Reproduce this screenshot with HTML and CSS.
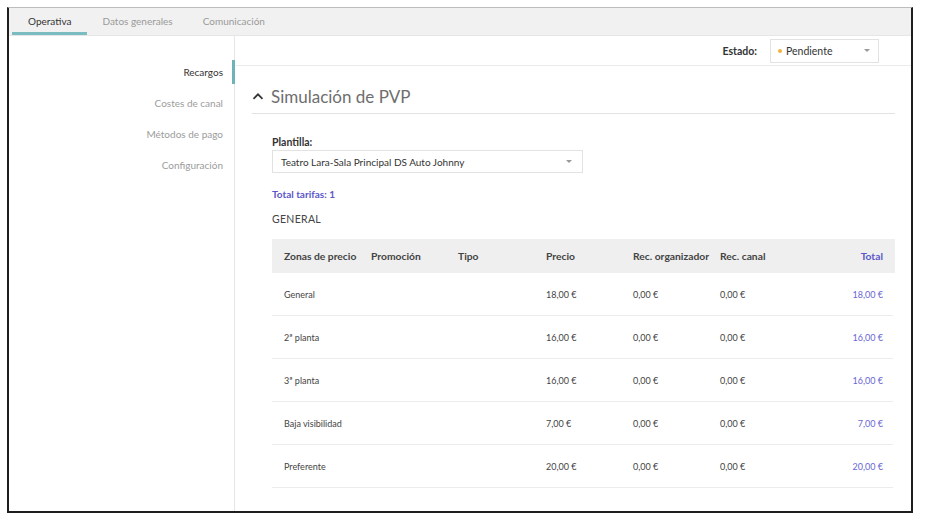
FILE: index.html
```html
<!DOCTYPE html>
<html lang="es">
<head>
<meta charset="utf-8">
<title>Simulación de PVP</title>
<link rel="stylesheet" href="styles.css">
</head>
<body>
<div class="frame">
  <nav class="tabs">
    <span class="tab active">Operativa</span>
    <span class="tab">Datos generales</span>
    <span class="tab">Comunicación</span>
  </nav>
  <div class="layout">
    <aside class="sidebar">
      <a class="side-item active">Recargos</a>
      <a class="side-item">Costes de canal</a>
      <a class="side-item">Métodos de pago</a>
      <a class="side-item">Configuración</a>
    </aside>
    <main class="main">
      <div class="topbar">
        <span class="estado-label">Estado:</span>
        <div class="select estado">
          <span class="dot"></span>
          <span class="select-text">Pendiente</span>
          <span class="caret"></span>
        </div>
      </div>
      <section class="section">
        <h2 class="section-title">
          <svg class="chev" width="12" height="8" viewBox="0 0 12 8"><path d="M1.5 6.8 L6 2.3 L10.5 6.8" fill="none" stroke="#333" stroke-width="1.7"/></svg>
          <span>Simulación de PVP</span>
        </h2>
        <div class="body">
          <label class="field-label">Plantilla:</label>
          <div class="select plantilla">
            <span class="select-text">Teatro Lara-Sala Principal DS Auto Johnny</span>
            <span class="caret"></span>
          </div>
          <div class="total-tarifas">Total tarifas: 1</div>
          <div class="group-name">GENERAL</div>
          <div class="table">
            <div class="row head">
              <span>Zonas de precio</span><span>Promoción</span><span>Tipo</span><span>Precio</span><span>Rec. organizador</span><span>Rec. canal</span><span class="total">Total</span>
            </div>
            <div class="row">
              <span>General</span><span></span><span></span><span>18,00 €</span><span>0,00 €</span><span>0,00 €</span><span class="total">18,00 €</span>
            </div>
            <div class="row">
              <span>2ª planta</span><span></span><span></span><span>16,00 €</span><span>0,00 €</span><span>0,00 €</span><span class="total">16,00 €</span>
            </div>
            <div class="row">
              <span>3ª planta</span><span></span><span></span><span>16,00 €</span><span>0,00 €</span><span>0,00 €</span><span class="total">16,00 €</span>
            </div>
            <div class="row">
              <span>Baja visibilidad</span><span></span><span></span><span>7,00 €</span><span>0,00 €</span><span>0,00 €</span><span class="total">7,00 €</span>
            </div>
            <div class="row">
              <span>Preferente</span><span></span><span></span><span>20,00 €</span><span>0,00 €</span><span>0,00 €</span><span class="total">20,00 €</span>
            </div>
          </div>
        </div>
      </section>
    </main>
  </div>
</div>
</body>
</html>
```
FILE: styles.css
```css
* { box-sizing: border-box; }
html, body { margin: 0; padding: 0; background: #fff; }
body {
  font-family: Lato, "Noto Sans", "Liberation Sans", sans-serif;
  color: #444;
  padding: 7px 12px 10px 7px;
  height: 523px;
  overflow: hidden;
}
.frame {
  width: 906px;
  height: 506px;
  border: 2px solid #1e1e1e;
  border-top: 1px solid #bdbdbd;
  display: flex;
  flex-direction: column;
  overflow: hidden;
}
.tabs {
  display: flex;
  height: 28px;
  background: #f1f1f1;
  border-bottom: 1px solid #e6e6e6;
  padding-left: 3px;
  flex: none;
}
.tab {
  font-size: 10px;
  color: #9a9a9a;
  padding: 0 15px;
  line-height: 26px;
  border-bottom: 3px solid transparent;
}
.tab.active {
  color: #333;
  padding: 0 16px;
  border-bottom-color: #7bbcc1;
}
.layout {
  flex: 1;
  display: flex;
  min-height: 0;
}
.sidebar {
  width: 226px;
  flex: none;
  border-right: 1px solid #e6e6e6;
  display: flex;
  flex-direction: column;
  align-items: stretch;
  gap: 7px;
  padding-top: 24px;
}
.side-item {
  display: block;
  height: 24px;
  line-height: 24px;
  text-align: right;
  padding-right: 9px;
  margin-right: -1px;
  font-size: 10px;
  color: #9c9c9c;
  border-right: 3px solid transparent;
}
.side-item.active {
  color: #333;
  border-right-color: #6fb2b8;
}
.main {
  flex: 1;
  min-width: 0;
  padding: 0 16px 0 17px;
}
.topbar {
  height: 30px;
  margin: 0 -16px 0 -17px;
  border-bottom: 1px solid #ebebeb;
  display: flex;
  align-items: center;
  justify-content: flex-end;
  padding-right: 32px;
  gap: 13px;
}
.estado-label {
  font-size: 10.5px;
  font-weight: 700;
  color: #333;
}
.select {
  border: 1px solid #e2e2e2;
  background: #fff;
  display: flex;
  align-items: center;
  font-size: 10.5px;
  color: #333;
  position: relative;
}
.estado {
  width: 109px;
  height: 24px;
  padding: 0 8px 0 7px;
  gap: 4px;
}
.dot {
  width: 4px;
  height: 4px;
  border-radius: 50%;
  background: #f2b138;
  flex: none;
}
.select-text { flex: 1; }
.caret {
  width: 0;
  height: 0;
  border-left: 3px solid transparent;
  border-right: 3px solid transparent;
  border-top: 3px solid #999;
  flex: none;
}
.section-title {
  margin: 0;
  height: 48px;
  padding-top: 20px;
  border-bottom: 1px solid #e2e2e2;
  display: flex;
  align-items: center;
  gap: 7px;
  font-size: 17px;
  font-weight: 400;
  color: #6e6e6e;
  padding-bottom: 7px;
}
.chev { margin-top: -1px; }
.body {
  padding-left: 20px;
  padding-top: 21px;
}
.field-label {
  display: block;
  font-size: 10.5px;
  font-weight: 700;
  color: #333;
  line-height: 14px;
}
.plantilla {
  width: 311px;
  height: 23px;
  margin-top: 1px;
  padding: 0 10px 0 8px;
  font-size: 10px;
}
.total-tarifas {
  margin-top: 15px;
  font-size: 10px;
  font-weight: 700;
  color: #5b57c9;
  line-height: 12px;
}
.group-name {
  margin-top: 13px;
  font-size: 10.5px;
  color: #444;
  letter-spacing: 0.3px;
  line-height: 12px;
}
.table {
  margin-top: 14px;
}
.row {
  display: grid;
  grid-template-columns: 87px 87px 88px 87px 87px 87px 1fr;
  align-items: center;
  height: 43px;
  padding: 0 10px 0 12px;
  font-size: 9px;
  color: #444;
  border-bottom: 1px solid #ececec;
  margin-right: 2px;
}
.row.head {
  height: 34px;
  background: #efefef;
  font-size: 10.3px;
  font-weight: 700;
  color: #444;
  border-bottom: none;
  margin-right: 0;
  padding-right: 12px;
}
.row .total {
  text-align: right;
  color: #6a66d4;
}
.row.head .total { color: #5b57c9; }
```
